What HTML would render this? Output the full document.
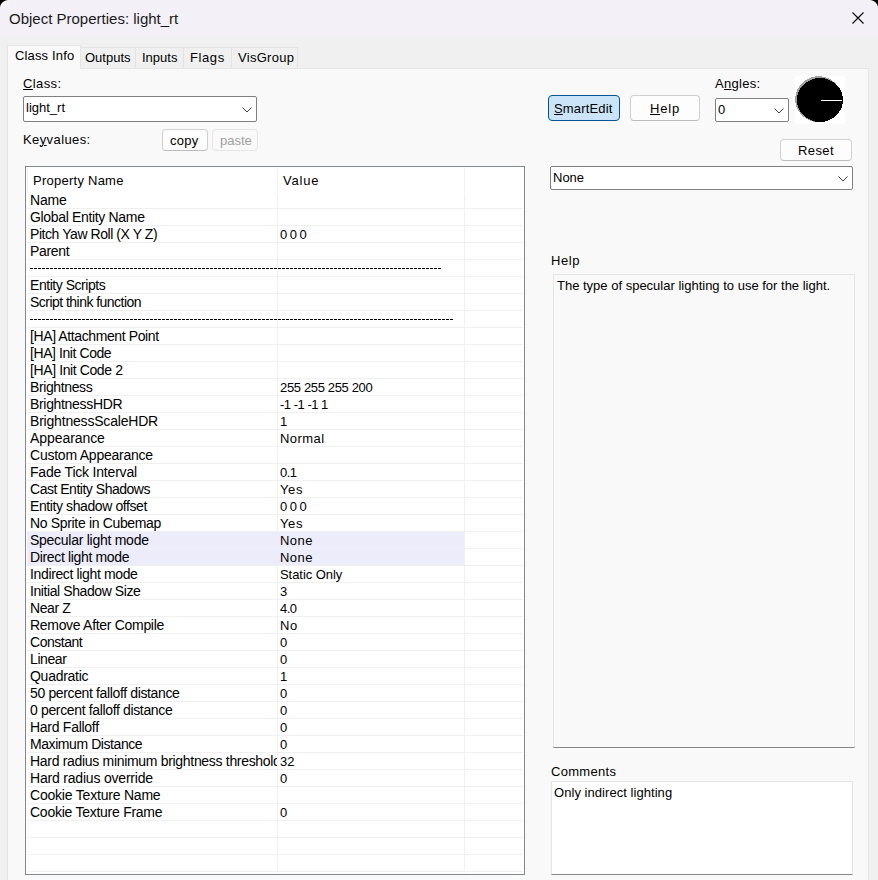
<!DOCTYPE html>
<html><head><meta charset="utf-8"><style>
*{margin:0;padding:0;box-sizing:border-box}
html,body{width:878px;height:880px;overflow:hidden;background:#f0f0f0}
body{position:relative;font-family:"Liberation Sans",sans-serif;font-size:13px;color:#000}
.a{position:absolute;white-space:pre;line-height:15px}
#title{position:absolute;left:0;top:0;width:878px;height:37px;background:#f3f0f7}
.corner{position:absolute;top:0;width:9px;height:8px}
.tab{position:absolute;background:#f0f0f0;border:1px solid #e3e3e3;border-bottom:none}
#panel{position:absolute;left:7px;top:68px;width:862px;height:830px;background:#f9f9f9;border:1px solid #e5e5e5}
.btn{position:absolute;background:#fdfdfd;border:1px solid #d0d0d0;border-bottom-color:#bcbcbc;border-radius:4px}
.combo{position:absolute;background:#fff;border:1px solid #7f7f7f;border-radius:2px}
.combo svg{position:absolute}
#list{position:absolute;left:25px;top:166px;width:500px;height:709px;background:#fff;border:1px solid #828790;overflow:hidden}
.hline{position:absolute;left:27px;width:496px;height:1px;background:#f0f0f0}
.vline{position:absolute;width:1px;background:#f0f0f0}
.hl{position:absolute;left:27px;width:437px;background:#edecfb}
.rk{position:absolute;left:30px;width:247px;height:17px;line-height:17px;font-size:14px;white-space:pre;overflow:hidden}
.rv{position:absolute;left:280px;height:17px;line-height:17px;font-size:13px;white-space:pre}
.dash{position:absolute;left:30px;height:1px;background:repeating-linear-gradient(90deg,#000 0,#000 3px,transparent 3px,transparent 4px)}
u{text-decoration:underline;text-decoration-thickness:1px;text-underline-offset:1px}
</style></head><body>
<div id="title"></div>
<div class="corner" style="left:0;background:radial-gradient(9px 8px at 9px 8px, transparent 80%, #fafafa 88%, #fafafa 94%, #000 106%)"></div>
<div class="corner" style="left:869px;background:radial-gradient(9px 8px at 0px 8px, transparent 80%, #fafafa 88%, #fafafa 94%, #000 106%)"></div>
<div class="a" style="left:9px;top:10px;font-size:15px;line-height:17px;color:#1a1a1a">Object Properties: light_rt</div>
<svg style="position:absolute;left:852px;top:12px" width="12" height="12" viewBox="0 0 12 12"><path d="M0.5 0.5L11.5 11.5M11.5 0.5L0.5 11.5" stroke="#000" stroke-width="1.1"/></svg>

<div id="panel"></div>
<div style="position:absolute;left:869px;top:69px;width:2px;height:811px;background:#f3f3f3"></div>
<div class="tab" style="left:80px;top:47px;width:56px;height:21px"></div>
<div class="tab" style="left:135px;top:47px;width:49px;height:21px"></div>
<div class="tab" style="left:183px;top:47px;width:49px;height:21px"></div>
<div class="tab" style="left:231px;top:47px;width:67px;height:21px"></div>
<div class="tab" style="left:7px;top:45px;width:74px;height:24px;background:#f9f9f9;border-color:#e5e5e5"></div>
<div class="a" style="left:15px;top:48px;letter-spacing:0.15px">Class Info</div>
<div class="a" style="left:85px;top:50px">Outputs</div>
<div class="a" style="left:142px;top:50px">Inputs</div>
<div class="a" style="left:190px;top:50px;letter-spacing:0.6px">Flags</div>
<div class="a" style="left:238px;top:50px;letter-spacing:0.28px">VisGroup</div>

<div class="a" style="left:23px;top:76px;letter-spacing:0.4px"><u>C</u>lass:</div>
<div class="combo" style="left:23px;top:96px;width:234px;height:26px"><div class="a" style="left:2px;top:3px">light_rt</div><svg style="left:218px;top:10px" width="10" height="6"><path d="M0.5 0.5 L5 5 L9.5 0.5" fill="none" stroke="#404040" stroke-width="1"/></svg></div>
<div class="a" style="left:23px;top:132px;letter-spacing:0.4px">Ke<u>y</u>values:</div>
<div class="btn" style="left:162px;top:129px;width:46px;height:22px"><div class="a" style="left:7px;top:3px;letter-spacing:0.3px">copy</div></div>
<div class="btn" style="left:212px;top:129px;width:46px;height:22px;border-color:#e5e5e5;background:#f9f9f9"><div class="a" style="left:7px;top:3px;color:#a0a0a0">paste</div></div>

<div id="list"></div>
<div style="position:absolute;left:27px;top:168px;width:1px;height:24px;background:#f0f0f0"></div>
<div class="vline" style="left:277px;top:168px;height:24px"></div>
<div class="vline" style="left:464px;top:168px;height:24px"></div>
<div class="vline" style="left:277px;top:193px;height:680px"></div>
<div class="vline" style="left:464px;top:193px;height:680px"></div>
<div class="a" style="left:33px;top:173px;letter-spacing:0.25px">Property Name</div>
<div class="a" style="left:283px;top:173px;letter-spacing:0.8px">Value</div>
<div class="hl" style="top:531px;height:17px"></div><div class="hl" style="top:548px;height:18px"></div><div class="hline" style="top:208px"></div><div class="hline" style="top:225px"></div><div class="hline" style="top:242px"></div><div class="hline" style="top:259px"></div><div class="hline" style="top:276px"></div><div class="hline" style="top:293px"></div><div class="hline" style="top:310px"></div><div class="hline" style="top:327px"></div><div class="hline" style="top:344px"></div><div class="hline" style="top:361px"></div><div class="hline" style="top:378px"></div><div class="hline" style="top:395px"></div><div class="hline" style="top:412px"></div><div class="hline" style="top:429px"></div><div class="hline" style="top:446px"></div><div class="hline" style="top:463px"></div><div class="hline" style="top:480px"></div><div class="hline" style="top:497px"></div><div class="hline" style="top:514px"></div><div class="hline" style="top:531px"></div><div class="hline" style="top:548px"></div><div style="position:absolute;left:27px;top:548px;width:437px;height:1px;background:#f1f0fa"></div><div class="hline" style="top:565px"></div><div class="hline" style="top:582px"></div><div class="hline" style="top:599px"></div><div class="hline" style="top:616px"></div><div class="hline" style="top:633px"></div><div class="hline" style="top:650px"></div><div class="hline" style="top:667px"></div><div class="hline" style="top:684px"></div><div class="hline" style="top:701px"></div><div class="hline" style="top:718px"></div><div class="hline" style="top:735px"></div><div class="hline" style="top:752px"></div><div class="hline" style="top:769px"></div><div class="hline" style="top:786px"></div><div class="hline" style="top:803px"></div><div class="hline" style="top:820px"></div><div class="hline" style="top:837px"></div><div class="hline" style="top:854px"></div><div class="hline" style="top:871px"></div><div class="rk" style="top:192px;letter-spacing:-0.167px">Name</div><div class="rk" style="top:209px;letter-spacing:-0.335px">Global Entity Name</div><div class="rk" style="top:226px;letter-spacing:-0.433px">Pitch Yaw Roll (X Y Z)</div><div class="rv" style="top:226px;letter-spacing:-0.550px">0 0 0</div><div class="rk" style="top:243px;letter-spacing:-0.320px">Parent</div><div class="dash" style="top:268px;width:412px"></div><div class="rk" style="top:277px;letter-spacing:-0.462px">Entity Scripts</div><div class="rk" style="top:294px;letter-spacing:-0.530px">Script think function</div><div class="dash" style="top:319px;width:424px"></div><div class="rk" style="top:328px;letter-spacing:-0.395px">[HA] Attachment Point</div><div class="rk" style="top:345px;letter-spacing:-0.423px">[HA] Init Code</div><div class="rk" style="top:362px;letter-spacing:-0.393px">[HA] Init Code 2</div><div class="rk" style="top:379px;letter-spacing:-0.389px">Brightness</div><div class="rv" style="top:379px;letter-spacing:-0.350px">255 255 255 200</div><div class="rk" style="top:396px;letter-spacing:-0.325px">BrightnessHDR</div><div class="rv" style="top:396px;letter-spacing:-0.489px">-1 -1 -1 1</div><div class="rk" style="top:413px;letter-spacing:-0.194px">BrightnessScaleHDR</div><div class="rv" style="top:413px;letter-spacing:0.000px">1</div><div class="rk" style="top:430px;letter-spacing:-0.067px">Appearance</div><div class="rv" style="top:430px;letter-spacing:0.440px">Normal</div><div class="rk" style="top:447px;letter-spacing:-0.231px">Custom Appearance</div><div class="rk" style="top:464px;letter-spacing:-0.200px">Fade Tick Interval</div><div class="rv" style="top:464px;letter-spacing:-0.600px">0.1</div><div class="rk" style="top:481px;letter-spacing:-0.483px">Cast Entity Shadows</div><div class="rv" style="top:481px;letter-spacing:0.600px">Yes</div><div class="rk" style="top:498px;letter-spacing:-0.405px">Entity shadow offset</div><div class="rv" style="top:498px;letter-spacing:-0.575px">0 0 0</div><div class="rk" style="top:515px;letter-spacing:-0.337px">No Sprite in Cubemap</div><div class="rv" style="top:515px;letter-spacing:0.600px">Yes</div><div class="rk" style="top:532px;letter-spacing:-0.267px">Specular light mode</div><div class="rv" style="top:532px;letter-spacing:0.433px">None</div><div class="rk" style="top:549px;letter-spacing:-0.344px">Direct light mode</div><div class="rv" style="top:549px;letter-spacing:0.433px">None</div><div class="rk" style="top:566px;letter-spacing:-0.361px">Indirect light mode</div><div class="rv" style="top:566px;letter-spacing:-0.060px">Static Only</div><div class="rk" style="top:583px;letter-spacing:-0.417px">Initial Shadow Size</div><div class="rv" style="top:583px;letter-spacing:0.000px">3</div><div class="rk" style="top:600px;letter-spacing:-0.420px">Near Z</div><div class="rv" style="top:600px;letter-spacing:-0.600px">4.0</div><div class="rk" style="top:617px;letter-spacing:-0.305px">Remove After Compile</div><div class="rv" style="top:617px;letter-spacing:0.600px">No</div><div class="rk" style="top:634px;letter-spacing:-0.471px">Constant</div><div class="rv" style="top:634px;letter-spacing:0.000px">0</div><div class="rk" style="top:651px;letter-spacing:-0.400px">Linear</div><div class="rv" style="top:651px;letter-spacing:0.000px">0</div><div class="rk" style="top:668px;letter-spacing:-0.275px">Quadratic</div><div class="rv" style="top:668px;letter-spacing:0.000px">1</div><div class="rk" style="top:685px;letter-spacing:-0.362px">50 percent falloff distance</div><div class="rv" style="top:685px;letter-spacing:0.000px">0</div><div class="rk" style="top:702px;letter-spacing:-0.352px">0 percent falloff distance</div><div class="rv" style="top:702px;letter-spacing:0.000px">0</div><div class="rk" style="top:719px;letter-spacing:-0.273px">Hard Falloff</div><div class="rv" style="top:719px;letter-spacing:0.000px">0</div><div class="rk" style="top:736px;letter-spacing:-0.427px">Maximum Distance</div><div class="rv" style="top:736px;letter-spacing:0.000px">0</div><div class="rk" style="top:753px;letter-spacing:-0.310px">Hard radius minimum brightness threshold</div><div class="rv" style="top:753px;letter-spacing:0.000px">32</div><div class="rk" style="top:770px;letter-spacing:-0.195px">Hard radius override</div><div class="rv" style="top:770px;letter-spacing:0.000px">0</div><div class="rk" style="top:787px;letter-spacing:-0.206px">Cookie Texture Name</div><div class="rk" style="top:804px;letter-spacing:-0.258px">Cookie Texture Frame</div><div class="rv" style="top:804px;letter-spacing:0.000px">0</div>

<div class="btn" style="left:548px;top:95px;width:72px;height:26px;background:#cce4f7;border-color:#005499"><div class="a" style="left:5px;top:5px;letter-spacing:0.15px"><u>S</u>martEdit</div></div>
<div class="btn" style="left:630px;top:95px;width:70px;height:26px"><div class="a" style="left:19px;top:5px;letter-spacing:0.8px"><u>H</u>elp</div></div>
<div class="a" style="left:715px;top:76px;letter-spacing:0.3px">A<u>n</u>gles:</div>
<div class="combo" style="left:715px;top:98px;width:74px;height:24px"><div class="a" style="left:2px;top:3px">0</div><svg style="left:58px;top:9px" width="10" height="6"><path d="M0.5 0.5 L5 5 L9.5 0.5" fill="none" stroke="#404040" stroke-width="1"/></svg></div>
<svg style="position:absolute;left:795px;top:76px" width="50" height="48" viewBox="0 0 50 48" shape-rendering="crispEdges"><rect width="50" height="48" fill="#fff"/><ellipse cx="23.6" cy="23.2" rx="23.4" ry="23" fill="#a0a0a0"/><ellipse cx="25" cy="24" rx="23" ry="22" fill="#000"/><rect x="26" y="24" width="21" height="1" fill="#fff"/></svg>
<div class="btn" style="left:780px;top:139px;width:72px;height:22px"><div class="a" style="left:17px;top:3px;letter-spacing:0.4px">Reset</div></div>
<div class="combo" style="left:550px;top:166px;width:303px;height:24px"><div class="a" style="left:2px;top:3px">None</div><svg style="left:287px;top:9px" width="10" height="6"><path d="M0.5 0.5 L5 5 L9.5 0.5" fill="none" stroke="#404040" stroke-width="1"/></svg></div>

<div class="a" style="left:551px;top:253px;letter-spacing:0.6px">Help</div>
<div style="position:absolute;left:553px;top:274px;width:302px;height:474px;background:#f9f9f9;border:1px solid #e5e5e5;border-bottom-color:#868686"></div>
<div class="a" style="left:557px;top:278px">The type of specular lighting to use for the light.</div>
<div class="a" style="left:551px;top:764px;letter-spacing:0.3px">Comments</div>
<div style="position:absolute;left:551px;top:781px;width:302px;height:94px;background:#fff;border:1px solid #e5e5e5;border-bottom-color:#868686"></div>
<div class="a" style="left:554px;top:785px;letter-spacing:0.05px">Only indirect lighting</div>
</body></html>
